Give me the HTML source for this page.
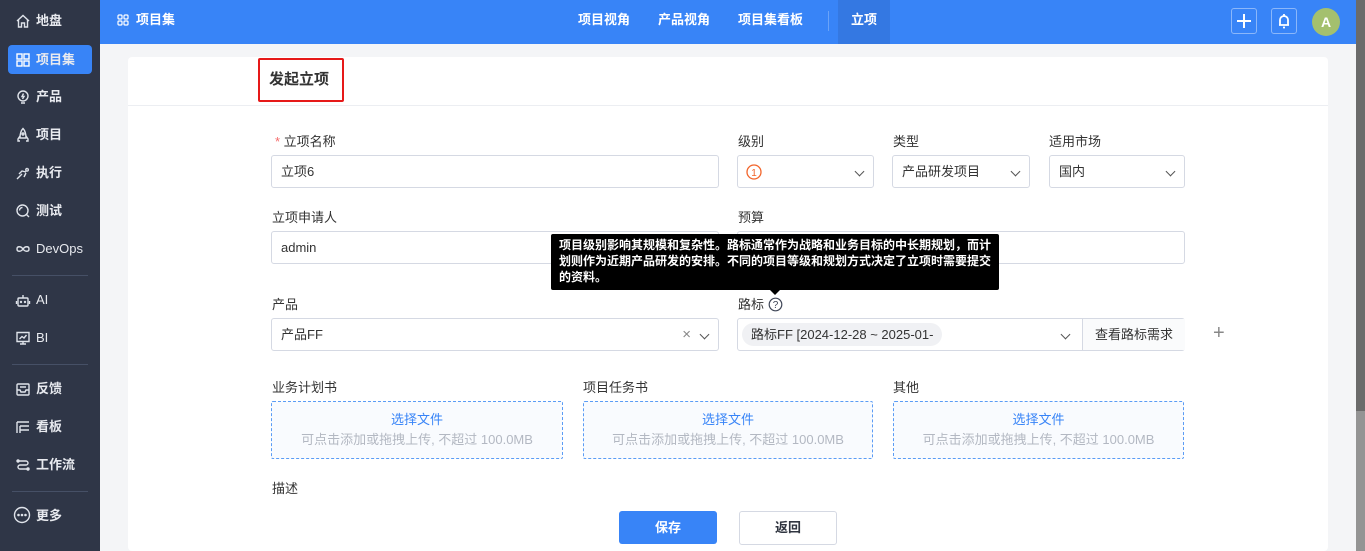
<!DOCTYPE html>
<html><head><meta charset="utf-8"><style>
*{box-sizing:border-box;margin:0;padding:0}
body{width:1365px;height:551px;overflow:hidden;background:#f4f5f7;font-family:"Liberation Sans","Noto Sans CJK SC",sans-serif;font-size:13px;color:#303540;position:relative}
.a{position:absolute}
#side{left:0;top:0;width:100px;height:551px;background:#2f3647}
.ni{position:absolute;left:8px;width:84px;height:29px;color:#e8eaef;font-size:13px;font-weight:bold;line-height:29px;padding-left:28px}
.ni svg{position:absolute;left:7px;top:7px}
.ni.on{background:#3884f7;border-radius:4px}
.sep{position:absolute;left:12px;width:76px;height:1px;background:#465066}
#top{left:100px;top:0;width:1256px;height:44px;background:#3884f7;color:#fff}
.tab{position:absolute;top:0;height:44px;line-height:40px;font-weight:bold;font-size:13px;color:#fff}
.card{left:128px;top:57px;width:1200px;height:494px;background:#fff;border-radius:4px}
.lbl{position:absolute;font-size:13px;color:#333}
.inp{position:absolute;height:33px;border:1px solid #d5d9e3;border-radius:3px;background:#fff;line-height:31px;padding-left:9px;font-size:13px;color:#333}
.chev{position:absolute;right:10px;top:12px;width:7px;height:7px;border-right:1.3px solid #555;border-bottom:1.3px solid #555;transform:rotate(45deg)}
.up{position:absolute;top:401px;height:58px;border:1px dashed #5b9cf5;border-radius:2px;background:#f9fbfe;text-align:center}
.up b{display:block;color:#3884f7;font-size:13px;margin-top:9px;font-weight:normal;line-height:18px}
.up span{display:block;color:#b3b8c2;font-size:13px;margin-top:2px;line-height:18px}
</style></head><body>
<div id="side" class="a">
<div class="ni" style="top:6px"><svg width="16" height="16" viewBox="0 0 16 16" fill="none" stroke="#dfe3ea" stroke-width="1.4"><path d="M2 8 8 2.5 14 8M3.5 7v7h3v-4h3v4h3V7"/></svg>地盘</div>
<div class="ni on" style="top:45px"><svg width="16" height="16" viewBox="0 0 16 16" fill="none" stroke="#fff" stroke-width="1.4"><rect x="2" y="2" width="5" height="5"/><rect x="9" y="2" width="5" height="5"/><rect x="2" y="9" width="5" height="5"/><rect x="9" y="9" width="5" height="5"/></svg>项目集</div>
<div class="ni" style="top:82px"><svg width="16" height="16" viewBox="0 0 16 16" fill="none" stroke="#dfe3ea" stroke-width="1.4"><circle cx="8" cy="7" r="5"/><path d="M6 14h4M8.5 4.5 7 7.5h2L7.5 10"/></svg>产品</div>
<div class="ni" style="top:120px"><svg width="16" height="16" viewBox="0 0 16 16" fill="none" stroke="#dfe3ea" stroke-width="1.4"><path d="M8 1.5C5.5 4 5 7 5 11h6c0-4-.5-7-3-9.5zM5 9l-2 3v2h2M11 9l2 3v2h-2"/><circle cx="8" cy="7" r="1"/></svg>项目</div>
<div class="ni" style="top:158px"><svg width="16" height="16" viewBox="0 0 16 16" fill="none" stroke="#dfe3ea" stroke-width="1.4"><path d="M2 14l5-5M4 9l3-3 4 1M9 12l2-4M12 3.5a1.3 1.3 0 1 0 .1 0"/></svg>执行</div>
<div class="ni" style="top:196px"><svg width="16" height="16" viewBox="0 0 16 16" fill="none" stroke="#dfe3ea" stroke-width="1.4"><circle cx="7.5" cy="7.5" r="5.5"/><path d="M11 11l3 3M4.5 7.5a3 3 0 0 1 3-3"/></svg>测试</div>
<div class="ni" style="top:234px;font-weight:normal"><svg width="16" height="16" viewBox="0 0 16 16" fill="none" stroke="#dfe3ea" stroke-width="1.4"><path d="M8 8c-2-3-6-3-6 0s4 3 6 0 6-3 6 0-4 3-6 0z"/></svg>DevOps</div>
<div class="sep" style="top:275px"></div>
<div class="ni" style="top:285px;font-weight:normal"><svg width="16" height="16" viewBox="0 0 16 16" fill="none" stroke="#dfe3ea" stroke-width="1.4"><rect x="3" y="6" width="10" height="8" rx="1"/><path d="M8 6V3M1.5 9v3M14.5 9v3"/><circle cx="6" cy="10" r=".5"/><circle cx="10" cy="10" r=".5"/></svg>AI</div>
<div class="ni" style="top:323px;font-weight:normal"><svg width="16" height="16" viewBox="0 0 16 16" fill="none" stroke="#dfe3ea" stroke-width="1.4"><path d="M2 2.5h12v9H2zM5 14h6M8 11.5V14M4.5 9l2.5-2.5 2 1.5 2.5-3"/></svg>BI</div>
<div class="sep" style="top:364px"></div>
<div class="ni" style="top:374px"><svg width="16" height="16" viewBox="0 0 16 16" fill="none" stroke="#dfe3ea" stroke-width="1.4"><rect x="2" y="3" width="12" height="11" rx="1"/><path d="M2 9h3l1 2h4l1-2h3M5 6h6"/></svg>反馈</div>
<div class="ni" style="top:412px"><svg width="16" height="16" viewBox="0 0 16 16" fill="none" stroke="#dfe3ea" stroke-width="1.4"><path d="M2 3h12M2 3v11M5 7h9M5 11h9M5 7v7"/></svg>看板</div>
<div class="ni" style="top:450px"><svg width="16" height="16" viewBox="0 0 16 16" fill="none" stroke="#dfe3ea" stroke-width="1.4"><path d="M2 4h9a2 2 0 0 1 0 4H5a2 2 0 0 0 0 4h9"/><circle cx="3" cy="4" r="1"/><circle cx="13" cy="12" r="1"/></svg>工作流</div>
<div class="sep" style="top:491px"></div>
<div class="ni" style="top:501px"><svg width="18" height="18" viewBox="0 0 18 18" fill="none" stroke="#dfe3ea" stroke-width="1.4" style="left:5px;top:5px"><circle cx="9" cy="9" r="7.5"/><circle cx="5.5" cy="9" r=".6" fill="#dfe3ea"/><circle cx="9" cy="9" r=".6" fill="#dfe3ea"/><circle cx="12.5" cy="9" r=".6" fill="#dfe3ea"/></svg>更多</div>
</div>
<div id="top" class="a">
<svg class="a" style="left:17px;top:14px" width="12" height="12" viewBox="0 0 12 12" fill="none" stroke="#fff" stroke-width="1.2"><rect x="1" y="1" width="4" height="4" rx="1"/><rect x="7" y="1" width="4" height="4" rx="1"/><rect x="1" y="7" width="4" height="4" rx="1"/><rect x="7" y="7" width="4" height="4" rx="1"/></svg>
<div class="tab" style="left:36px">项目集</div>
<div class="tab" style="left:478px">项目视角</div>
<div class="tab" style="left:558px">产品视角</div>
<div class="tab" style="left:638px">项目集看板</div>
<div class="a" style="left:728px;top:11px;width:1px;height:20px;background:#6aa3f8"></div>
<div class="tab" style="left:738px;width:52px;background:#3478e2;text-align:center">立项</div>
<div class="a" style="left:1131px;top:8px;width:26px;height:26px;border:1px solid #8bb7fa;border-radius:3px"><svg width="24" height="24" viewBox="0 0 24 24" stroke="#fff" stroke-width="2"><path d="M12 5v14M5 12h14"/></svg></div>
<div class="a" style="left:1171px;top:8px;width:26px;height:26px;border:1px solid #8bb7fa;border-radius:3px"><svg width="24" height="24" viewBox="0 0 24 24" fill="none" stroke="#fff" stroke-width="1.8"><path d="M8 16V11a4 4 0 0 1 8 0v5H7h10M12 5v2M11 18.5h2"/></svg></div>
<div class="a" style="left:1212px;top:8px;width:28px;height:28px;border-radius:50%;background:#a4c06e;color:#fff;text-align:center;line-height:28px;font-size:14px;font-weight:bold">A</div>
</div>
<div class="a" style="left:1356px;top:0;width:9px;height:411px;background:#6b6b6b"></div>
<div class="a" style="left:1356px;top:411px;width:9px;height:140px;background:#949494"></div>
<div class="a card">
<div class="a" style="left:0;top:48px;width:1200px;height:1px;background:#eceef2"></div>
<div class="a" style="left:130px;top:1px;width:86px;height:44px;border:2px solid #e61919;border-radius:2px;font-size:15px;font-weight:bold;line-height:40px;padding-left:9px;color:#333">发起立项</div>
</div>
<div class="lbl" style="left:275px;top:131px"><span style="color:#f56c6c">* </span>立项名称</div>
<div class="inp" style="left:271px;top:155px;width:448px">立项6</div>
<div class="lbl" style="left:738px;top:131px">级别</div>
<div class="inp" style="left:737px;top:155px;width:137px"><svg style="position:absolute;left:8px;top:8px" width="16" height="16" viewBox="0 0 16 16"><circle cx="8" cy="8" r="7" fill="none" stroke="#f2642a" stroke-width="1.3"/><text x="8" y="12" text-anchor="middle" font-size="10" fill="#f2642a" font-family="Liberation Sans">1</text></svg><i class="chev"></i></div>
<div class="lbl" style="left:893px;top:131px">类型</div>
<div class="inp" style="left:892px;top:155px;width:138px">产品研发项目<i class="chev"></i></div>
<div class="lbl" style="left:1049px;top:131px">适用市场</div>
<div class="inp" style="left:1049px;top:155px;width:136px">国内<i class="chev"></i></div>
<div class="lbl" style="left:272px;top:207px">立项申请人</div>
<div class="inp" style="left:271px;top:231px;width:448px">admin</div>
<div class="lbl" style="left:738px;top:207px">预算</div>
<div class="inp" style="left:737px;top:231px;width:448px"></div>
<div class="lbl" style="left:272px;top:294px">产品</div>
<div class="inp" style="left:271px;top:318px;width:448px">产品FF<span style="position:absolute;right:27px;top:0;color:#888;font-size:15px">×</span><i class="chev"></i></div>
<div class="lbl" style="left:738px;top:294px">路标 <svg style="vertical-align:-3px" width="15" height="15" viewBox="0 0 15 15"><circle cx="7.5" cy="7.5" r="6.3" fill="none" stroke="#3e4556" stroke-width="1.2"/><text x="7.5" y="11" text-anchor="middle" font-size="10" fill="#3e4556" font-family="Liberation Sans">?</text></svg></div>
<div class="inp" style="left:737px;top:318px;width:448px;padding:0"><span style="position:absolute;left:4px;top:4px;height:23px;line-height:23px;background:#f0f1f4;border-radius:12px;padding:0 9px;font-size:13px;width:200px;overflow:hidden;white-space:nowrap">路标FF [2024-12-28 ~ 2025-01-</span><i class="chev" style="right:115px"></i><span style="position:absolute;left:344px;top:0;width:103px;height:31px;border-left:1px solid #d5d9e3;background:#fafbfc;text-align:center">查看路标需求</span></div>
<div class="a" style="left:1213px;top:322px;font-size:20px;color:#888;font-weight:300">+</div>
<div class="a" style="left:551px;top:234px;width:448px;height:56px;background:#000;border-radius:2px;color:#fff;font-size:12px;font-weight:bold;line-height:16px;padding:3px 8px;white-space:nowrap;overflow:hidden">项目级别影响其规模和复杂性。路标通常作为战略和业务目标的中长期规划，而计<br>划则作为近期产品研发的安排。不同的项目等级和规划方式决定了立项时需要提交<br>的资料。</div>
<div class="a" style="left:770px;top:290px;width:0;height:0;border-left:5px solid transparent;border-right:5px solid transparent;border-top:5px solid #000"></div>
<div class="lbl" style="left:272px;top:377px">业务计划书</div>
<div class="lbl" style="left:583px;top:377px">项目任务书</div>
<div class="lbl" style="left:893px;top:377px">其他</div>
<div class="up" style="left:271px;width:292px"><b>选择文件</b><span>可点击添加或拖拽上传, 不超过 100.0MB</span></div>
<div class="up" style="left:583px;width:290px"><b>选择文件</b><span>可点击添加或拖拽上传, 不超过 100.0MB</span></div>
<div class="up" style="left:893px;width:291px"><b>选择文件</b><span>可点击添加或拖拽上传, 不超过 100.0MB</span></div>
<div class="lbl" style="left:272px;top:478px">描述</div>
<div class="a" style="left:619px;top:511px;width:98px;height:33px;background:#3884f7;border-radius:3px;color:#fff;text-align:center;line-height:33px;font-weight:bold">保存</div>
<div class="a" style="left:739px;top:511px;width:98px;height:34px;border:1px solid #d5d9e3;border-radius:3px;background:#fff;text-align:center;line-height:32px;font-weight:bold">返回</div>
</body></html>
